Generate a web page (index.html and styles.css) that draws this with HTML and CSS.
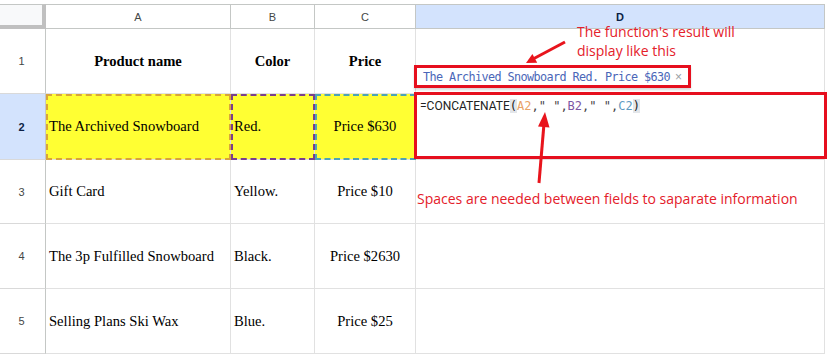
FILE: index.html
```html
<!DOCTYPE html>
<html>
<head>
<meta charset="utf-8">
<link rel="stylesheet" href="styles.css">
</head>
<body>
<div class="page">
  <div class="sheet">
    <div class="corner"></div>
    <div class="colhead">A</div>
    <div class="colhead">B</div>
    <div class="colhead">C</div>
    <div class="colhead sel">D</div>

    <div class="rowhead">1</div>
    <div class="cell hdr center">Product name</div>
    <div class="cell hdr center">Color</div>
    <div class="cell hdr center">Price</div>
    <div class="cell"></div>

    <div class="rowhead sel">2</div>
    <div class="cell yellow dash-a">The Archived Snowboard</div>
    <div class="cell yellow dash-b">Red.</div>
    <div class="cell yellow dash-c center">Price $630</div>
    <div class="cell formula-cell"><span class="fn">=CONCATENATE</span><span class="mono"><span class="paren">(</span><span class="ref-a">A2</span>," ",<span class="ref-b">B2</span>," ",<span class="ref-c">C2</span><span class="paren">)</span></span></div>

    <div class="rowhead">3</div>
    <div class="cell">Gift Card</div>
    <div class="cell">Yellow.</div>
    <div class="cell center">Price $10</div>
    <div class="cell"></div>

    <div class="rowhead">4</div>
    <div class="cell">The 3p Fulfilled Snowboard</div>
    <div class="cell">Black.</div>
    <div class="cell center">Price $2630</div>
    <div class="cell"></div>

    <div class="rowhead">5</div>
    <div class="cell">Selling Plans Ski Wax</div>
    <div class="cell">Blue.</div>
    <div class="cell center">Price $25</div>
    <div class="cell"></div>
  </div>

  <div class="note note-result">The function's result will<br>display like this</div>
  <div class="pill">The Archived Snowboard Red. Price $630 <span class="x">×</span></div>
  <div class="formula-box"></div>
  <div class="note note-spaces">Spaces are needed between fields to saparate information</div>

  <svg class="arrows" width="827" height="354" viewBox="0 0 827 354">
    <line x1="565" y1="42" x2="534" y2="58.5" stroke="#e8141c" stroke-width="3"/>
    <polygon points="526,63 537.2,62.7 532.4,53.9" fill="#e8141c"/>
    <line x1="539" y1="183" x2="543.8" y2="126" stroke="#e8141c" stroke-width="3"/>
    <polygon points="545,112 549.5,127.5 538,126.5" fill="#e8141c"/>
  </svg>
</div>
</body>
</html>
```

FILE: styles.css
```css
* { box-sizing: border-box; }

body {
  margin: 0;
  background: #fff;
}

.page {
  position: relative;
  width: 827px;
  height: 354px;
  padding-top: 4px;
  overflow: hidden;
}

.sheet {
  display: grid;
  grid-template-columns: 46px 185px 84px 101px 409px;
  grid-template-rows: 25px 65px 66px 64px 65px 65px;
}

.corner {
  background: #f8f9fa;
  border-top: 1px solid #c4c7c5;
  border-right: 4px solid #c0c0c0;
  border-bottom: 4px solid #c0c0c0;
}

.colhead {
  display: flex;
  align-items: center;
  justify-content: center;
  border-top: 1px solid #c4c7c5;
  border-right: 1px solid #c4c7c5;
  border-bottom: 1px solid #c4c7c5;
  font-family: "Liberation Sans", Arial, sans-serif;
  font-size: 11px;
  color: #444746;
  background: #fff;
}

.colhead.sel {
  background: #d3e3fd;
  color: #0b1f44;
  font-weight: bold;
}

.rowhead {
  display: flex;
  align-items: center;
  justify-content: center;
  padding-right: 2px;
  border-right: 1px solid #c4c7c5;
  border-bottom: 1px solid #d9d9d9;
  font-family: "Liberation Sans", Arial, sans-serif;
  font-size: 11px;
  color: #444746;
}

.rowhead.sel {
  background: #d3e3fd;
  color: #0b1f44;
  font-weight: bold;
}

.cell {
  display: flex;
  align-items: center;
  padding: 0 3px;
  border-right: 1px solid #e1e1e1;
  border-bottom: 1px solid #e1e1e1;
  font-family: "Liberation Serif", "Times New Roman", serif;
  font-size: 14.6px;
  color: #000;
  white-space: nowrap;
}

.cell.center { justify-content: center; }
.cell.hdr { font-weight: bold; }

.yellow { background: #ffff33; }

.dash-a { outline: 2px dashed #d9a43a; outline-offset: -2px; }
.dash-b { outline: 2px dashed #7a3f8c; outline-offset: -2px; }
.dash-c { outline: 2px dashed #4da3b6; outline-offset: -2px; }

.formula-cell {
  align-items: flex-start;
  padding: 4px 0 0 4px;
  font-size: 12px;
  line-height: 16px;
  color: #333;
}

.fn {
  font-family: Roboto, "Liberation Sans", sans-serif;
  font-size: 12px;
  color: #222;
}

.mono {
  font-family: "DejaVu Sans Mono", "Liberation Mono", monospace;
  font-size: 12px;
  color: #444;
}

.paren {
  background: #e3e6ea;
  color: #222;
}

.ref-a { color: #e9a266; }
.ref-b { color: #7d56a4; }
.ref-c { color: #5f9bc2; }

.note {
  position: absolute;
  font-family: "Open Sans", "Noto Sans", sans-serif;
  font-size: 14px;
  line-height: 19px;
  color: #e4202a;
  white-space: nowrap;
}

.note-result { left: 577px; top: 22px; }
.note-spaces { left: 417px; top: 189px; }

.pill {
  position: absolute;
  left: 414px;
  top: 65px;
  width: 277px;
  height: 23px;
  border: 3px solid #e60f1e;
  background: #fff;
  padding: 0 0 0 6px;
  display: flex;
  align-items: center;
  font-family: "DejaVu Sans Mono", "Liberation Mono", monospace;
  font-size: 11.8px;
  letter-spacing: -0.6px;
  color: #4a66b8;
  white-space: nowrap;
  box-shadow: 0 2px 2px rgba(0, 0, 0, 0.15);
}

.pill .x {
  color: #9aa0a6;
  font-family: "Liberation Sans", sans-serif;
  font-size: 12px;
  margin-left: 5px;
}

.formula-box {
  position: absolute;
  left: 414px;
  top: 92px;
  width: 413px;
  height: 67px;
  border: 3px solid #e60f1e;
}

.arrows {
  position: absolute;
  left: 0;
  top: 0;
  pointer-events: none;
}
```
